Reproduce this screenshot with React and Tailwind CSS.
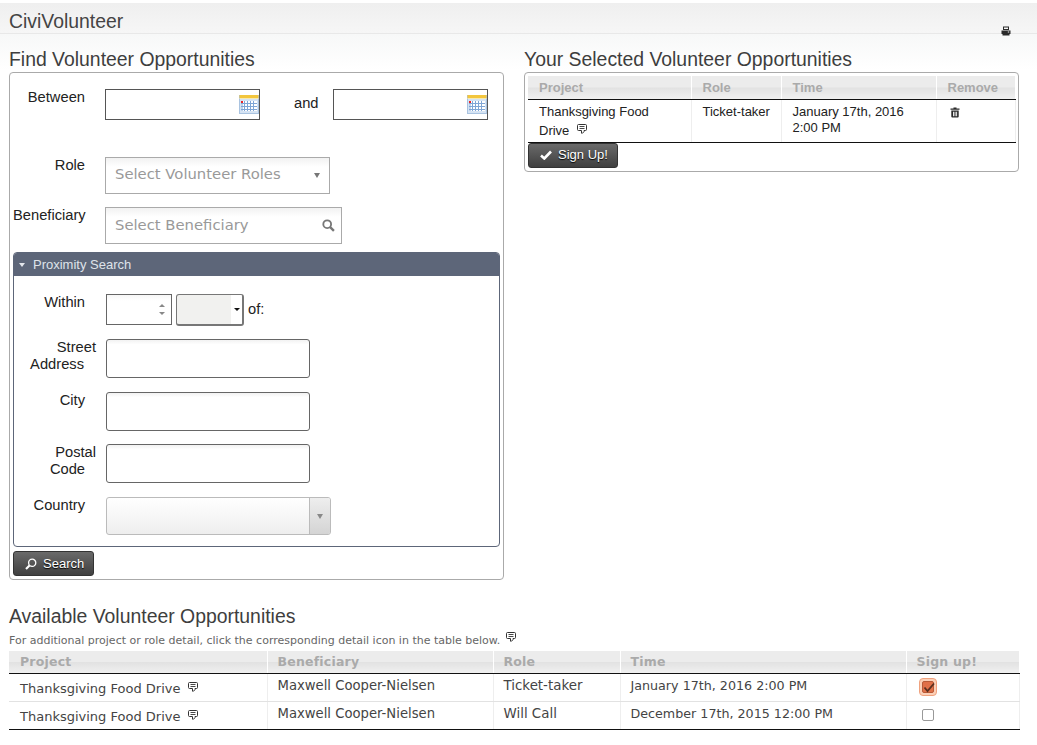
import React from "react";

const Comment = ({ className = "" }) => (
  <svg viewBox="0 0 10 11" width="10" height="11" className={className} fill="none" stroke="#333" strokeWidth="1">
    <path d="M1.5 0.5h7a1 1 0 0 1 1 1v4a1 1 0 0 1-1 1H7v1.2L5.5 9.2H4.5V6.5H1.5a1 1 0 0 1-1-1v-4a1 1 0 0 1 1-1z" />
    <path d="M2.5 2.5h5M2.5 4.5h5" strokeWidth="0.9" />
  </svg>
);

const Calendar = () => (
  <svg viewBox="0 0 20 19" width="20" height="19" className="absolute right-0 top-[5px]">
    <rect x="0.5" y="0.5" width="19" height="18" fill="#d5e3f3" stroke="#a9c3e0" />
    <rect x="0.5" y="0" width="19" height="3" fill="#f3c63d" />
    <rect x="0.5" y="3" width="19" height="1" fill="#f7e9b0" />
    <rect x="2" y="6" width="16" height="10" fill="#fff" />
    {[4.5, 7.5, 10.5, 13.5].map((x) => (
      <path key={x} d={`M${x + 1} 6v10`} stroke="#7fa6d6" strokeWidth="1" />
    ))}
    <path d="M2 8.5h16M2 11.5h16M2 14.5h16M3 6v10" stroke="#7fa6d6" strokeWidth="1" />
    <rect x="2" y="6" width="2" height="2" fill="#e22" />
  </svg>
);

const Trash = () => (
  <svg viewBox="0 0 10 11" width="10" height="11" fill="#2a2a2a">
    <path d="M3.5 0.5h3v1h3v1.2H0.5V1.500h3z" />
    <path d="M1.300 3.500h7.400v6a1 1 0 0 1-1 1H2.300a1 1 0 0 1-1-1zM3 4.700v4.600h.9V4.700zM4.600 4.700v4.600h.9V4.700zM6.200 4.700v4.600h.9V4.700z" fillRule="evenodd" />
  </svg>
);

const Printer = () => (
  <svg viewBox="0 0 10 10" width="10" height="10" fill="#2a2a2a">
    <path d="M2 0.500h6v3.500H2zM3 1.500v1.600h4V1.500z" fillRule="evenodd" />
    <path d="M0.500 4.500h9V8H8.500v1.500h-7V8H.5zM6.800 5.500v1h1.400v-1z" fillRule="evenodd" />
  </svg>
);

const Glass = ({ color = "#777", size = 12, weight = 1.7, flip = false }) => (
  <svg viewBox="0 0 12 12" width={size} height={size} fill="none" stroke={color} style={flip ? { transform: "scaleX(-1)" } : undefined}>
    <circle cx="4.800" cy="4.800" r="3.600" strokeWidth={weight} />
    <path d="M7.500 7.500L11 11" strokeWidth="2.200" />
  </svg>
);

const Btn = ({ icon, w, children }) => (
  <button className={`${w} h-[25px] flex items-center rounded-[3px] border border-[#333] bg-gradient-to-b from-[#6a6a6a] to-[#404040] text-[13px] text-white [text-shadow:0_1px_1px_#000] pl-[11px] gap-[6px]`}>
    {icon}
    <span>{children}</span>
  </button>
);

const labelCls = "text-[14.7px] leading-[17px] text-[#222]";
const textInputCls =
  "h-[39px] w-[204px] rounded-[3px] border border-[#666] bg-gradient-to-b from-[#f2f2f2] to-white to-[12%]";
const thGrad = "bg-[linear-gradient(#ececec_0%,#ececec_48%,#e2e2e2_52%,#f0f0f0_100%)]";
const heading = "text-[19.4px] leading-[25px] text-[#3e3e3e] h-[25px]";

const TopTh = ({ w, children }) => (
  <th className={`${w} h-[23px] ${thGrad} border-r border-white border-b border-b-[#111] pl-[11px] text-left text-[13px] font-bold text-[#aaa]`}>
    {children}
  </th>
);
const TopTd = ({ children, cls = "" }) => (
  <td className={`align-top pl-[11px] pt-[4px] border-r border-[#eee] border-b border-b-[#111] text-[13px] leading-[16px] text-[#222] ${cls}`}>
    {children}
  </td>
);

const BotTh = ({ w, pad = "pl-[10px]", children }) => (
  <th className={`${w} h-[22px] ${thGrad} border-r border-white border-b border-b-[#111] ${pad} pt-[2px] text-left text-[12.5px] font-bold tracking-[0.2px] text-[#aaa]`}>
    {children}
  </th>
);
const BotRow = ({ role, time, check, last }) => {
  const b = last ? "border-b-[#111]" : "border-b-[#e2e2e2]";
  const td = `align-top border-r border-[#eee] border-b ${b} pl-[10px] pt-[4px] text-[13px] leading-[16px] text-[#444]`;
  return (
    <tr className="h-[28px]">
      <td className={`${td} !pl-[11px] !pt-[7px]`}>
        <span className="flex items-center">
          Thanksgiving Food Drive
          <Comment className="ml-[8px] -mt-[2px]" />
        </span>
      </td>
      <td className={`${td} !text-[13.2px]`}>Maxwell Cooper-Nielsen</td>
      <td className={`${td} !text-[13.4px]`}>{role}</td>
      <td className={`${td} !text-[12.7px]`}>{time}</td>
      <td className={`${td} !pl-[12px]`}>{check}</td>
    </tr>
  );
};

export default function App() {
  return (
    <div className="w-[1037px] h-[745px] overflow-hidden bg-white text-[#333] font-['Liberation_Sans',sans-serif]">
      <div className="h-[3px] bg-white" />
      <div className="h-[31px] flex items-center justify-between pl-[9px] pr-[26px] border-b border-[#e8e8e8] bg-gradient-to-b from-[#efefef] to-[#f6f6f6]">
        <span className="text-[19.4px] text-[#444] mt-[7px]">CiviVolunteer</span>
        <span className="relative z-10 self-end -mb-[3px] flex"><Printer /></span>
      </div>

      <div className="flex items-start gap-[20px] pl-[9px] pt-[13px] bg-[linear-gradient(#f7f8f8,#ffffff_36px)]">
        {/* Left column */}
        <section className="w-[495px]">
          <h2 className={heading}>Find Volunteer Opportunities</h2>
          <div className="h-[508px] rounded-[4px] border border-[#aaa] bg-white pl-[3px] pt-[16px]">
            {/* Dates */}
            <div className="flex items-start h-[68px]">
              <label className={`${labelCls} w-[72px] text-right`}>Between</label>
              <div className="relative ml-[20px] w-[155px] h-[31px] border border-[#555] bg-white"><Calendar /></div>
              <span className={`${labelCls} ml-[34px] mt-[6px] w-[39px]`}>and</span>
              <div className="relative w-[155px] h-[31px] border border-[#555] bg-white"><Calendar /></div>
            </div>
            {/* Role */}
            <div className="flex items-start h-[50px]">
              <label className={`${labelCls} w-[72px] text-right`}>Role</label>
              <div className="ml-[20px] w-[225px] h-[37px] border border-[#aaa] bg-gradient-to-b from-[#f2f2f2] to-white to-[25%] flex items-center pl-[9px] pr-[9px] font-['DejaVu_Sans',sans-serif] text-[14.8px] text-[#999]">
                <span className="flex-1 -mt-[2px]">Select Volunteer Roles</span>
                <span className="border-x-[3px] border-t-[5px] border-x-transparent border-t-[#777]" />
              </div>
            </div>
            {/* Beneficiary */}
            <div className="flex items-start h-[45px]">
              <label className={`${labelCls} w-[72px] text-right`}>Beneficiary</label>
              <div className="ml-[20px] w-[237px] h-[37px] border border-[#aaa] bg-gradient-to-b from-[#f2f2f2] to-white to-[25%] flex items-center pl-[9px] pr-[6px] font-['DejaVu_Sans',sans-serif] text-[14.8px] text-[#999]">
                <span className="flex-1">Select Beneficiary</span>
                <Glass size={13} />
              </div>
            </div>
            {/* Proximity */}
            <div className="w-[487px] h-[295px] rounded-[4px] border border-[#5d6679] overflow-hidden">
              <div className="h-[23px] bg-[#5d6679] flex items-center pl-[5px] text-[13px] text-[#dfe3ea]">
                <span className="border-x-[3.5px] border-t-[4px] border-x-transparent border-t-[#e4e7ec]" />
                <span className="ml-[8px]">Proximity Search</span>
              </div>
              <div className="pt-[18px]">
                <div className="flex items-start h-[45px]">
                  <label className={`${labelCls} w-[71px] text-right`}>Within</label>
                  <div className="ml-[21px] w-[66px] h-[31px] border border-[#666] bg-gradient-to-b from-[#f6f6f6] to-white to-[20%] flex items-center justify-end pr-[6px]">
                    <span className="flex flex-col gap-[5px]">
                      <span className="border-x-[3px] border-b-[3px] border-x-transparent border-b-[#888]" />
                      <span className="border-x-[3px] border-t-[3px] border-x-transparent border-t-[#888]" />
                    </span>
                  </div>
                  <div className="ml-[4px] w-[68px] h-[32px] rounded-[3px] border border-[#777] border-r-2 border-b-2 bg-[#f1f1ef] flex overflow-hidden">
                    <span className="flex-1" />
                    <span className="w-[11px] bg-white flex items-center justify-center">
                      <span className="border-x-[3px] border-t-[3px] border-x-transparent border-t-[#111]" />
                    </span>
                  </div>
                  <span className={`${labelCls} ml-[4px] mt-[7px]`}>of:</span>
                </div>
                <div className="flex items-start h-[53px]">
                  <label className={`${labelCls} w-[82px] text-right`}>
                    Street<br /><span className="relative -left-[12px]">Address</span>
                  </label>
                  <div className={`ml-[10px] ${textInputCls}`} />
                </div>
                <div className="flex items-start h-[52px]">
                  <label className={`${labelCls} w-[71px] text-right`}>City</label>
                  <div className={`ml-[21px] ${textInputCls}`} />
                </div>
                <div className="flex items-start h-[53px]">
                  <label className={`${labelCls} w-[82px] text-right`}>
                    Postal<br /><span className="relative -left-[11px]">Code</span>
                  </label>
                  <div className={`ml-[10px] ${textInputCls}`} />
                </div>
                <div className="flex items-start">
                  <label className={`${labelCls} w-[71px] text-right`}>Country</label>
                  <div className="ml-[21px] w-[225px] h-[38px] rounded-[3px] border border-[#bbb] bg-gradient-to-b from-white to-[#eee] flex overflow-hidden">
                    <span className="flex-1" />
                    <span className="w-[21px] border-l border-[#bbb] bg-gradient-to-b from-[#eee] to-[#d4d4d4] flex items-center justify-center">
                      <span className="border-x-[3.5px] border-t-[5px] border-x-transparent border-t-[#888]" />
                    </span>
                  </div>
                </div>
              </div>
            </div>
            <div className="mt-[4px]">
              <Btn w="w-[81px]" icon={<Glass color="#fff" size={12} weight={1.3} flip />}>Search</Btn>
            </div>
          </div>
        </section>

        {/* Right column */}
        <section className="w-[495px]">
          <h2 className={heading}>Your Selected Volunteer Opportunities</h2>
          <div className="h-[100px] rounded-[4px] border border-[#aaa] bg-white pl-[3px] pt-[3px]">
            <table className="table-fixed border-collapse w-[487px]">
              <thead>
                <tr>
                  <TopTh w="w-[163px]">Project</TopTh>
                  <TopTh w="w-[90px]">Role</TopTh>
                  <TopTh w="w-[155px]">Time</TopTh>
                  <TopTh w="w-[79px]">Remove</TopTh>
                </tr>
              </thead>
              <tbody>
                <tr className="h-[43px]">
                  <TopTd>
                    Thanksgiving Food<br />
                    <span className="inline-flex items-center mt-[3px]">Drive<Comment className="ml-[8px] -mt-[3px]" /></span>
                  </TopTd>
                  <TopTd>Ticket-taker</TopTd>
                  <TopTd>January 17th, 2016<br />2:00 PM</TopTd>
                  <TopTd cls="!pl-[13px] !pt-[7px]"><Trash /></TopTd>
                </tr>
              </tbody>
            </table>
            <Btn
              w="w-[90px]"
              icon={
                <svg viewBox="0 0 12 10" width="12" height="10" fill="none" stroke="#fff" strokeWidth="2.600">
                  <path d="M1 5.500L4.300 8.500L11 1.500" />
                </svg>
              }
            >
              Sign Up!
            </Btn>
          </div>
        </section>
      </div>

      {/* Bottom */}
      <section className="mx-[9px] mt-[24px] w-[1010px]">
        <h2 className={heading}>Available Volunteer Opportunities</h2>
        <p className="h-[22px] pt-[5px] flex items-start font-['DejaVu_Sans',sans-serif] text-[11px] leading-[14px] text-[#666]">
          <span>For additional project or role detail, click the corresponding detail icon in the table below.</span>
          <Comment className="ml-[6px] -mt-[2px]" />
        </p>
        <table className="table-fixed border-collapse w-[1010px] font-['DejaVu_Sans',sans-serif]">
          <thead>
            <tr>
              <BotTh w="w-[258px]" pad="pl-[11px]">Project</BotTh>
              <BotTh w="w-[226px]">Beneficiary</BotTh>
              <BotTh w="w-[127px]">Role</BotTh>
              <BotTh w="w-[286px]">Time</BotTh>
              <BotTh w="w-[113px]">Sign up!</BotTh>
            </tr>
          </thead>
          <tbody>
            <BotRow
              role="Ticket-taker"
              time="January 17th, 2016 2:00 PM"
              check={
                <span className="block w-[18px] h-[18px] rounded-[4px] border border-[#f0a27e] bg-[#fbd0b8] p-[2px]">
                  <span className="block w-full h-full rounded-[2px] bg-[#e07048] border border-[#b85a38]">
                    <svg viewBox="0 0 12 12" width="12" height="12" fill="none" stroke="#5a3020" strokeWidth="1.800">
                      <path d="M1.500 5.500L4.500 9L11 1.500" />
                    </svg>
                  </span>
                </span>
              }
            />
            <BotRow
              last
              role="Will Call"
              time="December 17th, 2015 12:00 PM"
              check={<span className="block ml-[3px] mt-[3px] w-[12px] h-[12px] rounded-[2px] border border-[#999] bg-white" />}
            />
          </tbody>
        </table>
      </section>
    </div>
  );
}
